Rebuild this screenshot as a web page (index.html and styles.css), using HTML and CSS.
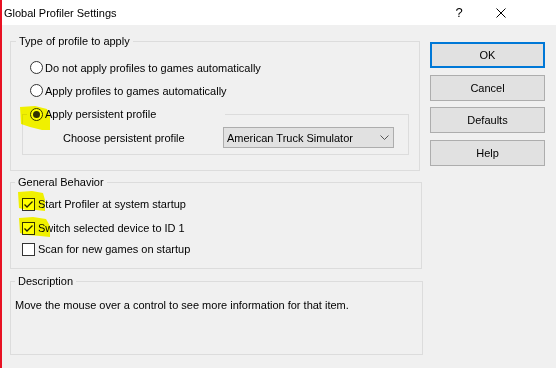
FILE: index.html
```html
<!DOCTYPE html>
<html lang="en">
<head>
  <meta charset="UTF-8">
  <title>Global Profiler Settings</title>
  <link rel="stylesheet" href="styles.css">
</head>
<body>
  <div class="titlebar">
    <span class="title">Global Profiler Settings</span>
    <span class="title-button">?</span>
    <span class="title-button">
      <svg width="10" height="10" viewBox="0 0 10 10"><path d="M0.5 0.5 L9.5 9.5 M9.5 0.5 L0.5 9.5" stroke="#000" stroke-width="1" fill="none"/></svg>
    </span>
  </div>

  <div class="dialog">
    <div class="settings">
      <fieldset class="group group-type">
        <legend>Type of profile to apply</legend>
        <div class="group-body">
          <label class="option"><span class="radio"></span>Do not apply profiles to games automatically</label>
          <label class="option"><span class="radio"></span>Apply profiles to games automatically</label>
          <fieldset class="subgroup">
            <legend class="sub-legend"><label class="option option-legend"><span class="radio checked"></span>Apply persistent profile</label></legend>
            <div class="profile-row">
              <span class="profile-label">Choose persistent profile</span>
              <div class="select">
                <span>American Truck Simulator</span>
                <svg class="chevron" width="9" height="5" viewBox="0 0 9 5"><path d="M0.5 0.5 L4.5 4.5 L8.5 0.5" stroke="#555" stroke-width="1" fill="none"/></svg>
              </div>
            </div>
          </fieldset>
        </div>
      </fieldset>

      <fieldset class="group group-behavior">
        <legend class="legend-tight">General Behavior</legend>
        <div class="group-body checks">
          <label class="check"><span class="box"><svg width="11" height="11" viewBox="0 0 11 11"><path d="M1.5 5.5 L4 8 L9.5 2.5" stroke="#222" stroke-width="1.3" fill="none"/></svg></span>Start Profiler at system startup</label>
          <label class="check check-second"><span class="box"><svg width="11" height="11" viewBox="0 0 11 11"><path d="M1.5 5.5 L4 8 L9.5 2.5" stroke="#222" stroke-width="1.3" fill="none"/></svg></span>Switch selected device to ID 1</label>
          <label class="check check-third"><span class="box"></span>Scan for new games on startup</label>
        </div>
      </fieldset>

      <fieldset class="group group-description">
        <legend class="legend-tight">Description</legend>
        <p class="description">Move the mouse over a control to see more information for that item.</p>
      </fieldset>
    </div>

    <div class="actions">
      <button class="button default">OK</button>
      <button class="button">Cancel</button>
      <button class="button">Defaults</button>
      <button class="button">Help</button>
    </div>
  </div>

  <!-- highlighter marks drawn over the screenshot -->
  <svg class="marks" width="556" height="368" viewBox="0 0 556 368">
    <path d="M20 107 L35 106 L47 109 L50 116 L50 130 L42 130 L30 127 L21 124 Z" fill="#ffff00"/>
    <path d="M18 192 L32 191 L43 193 L45 200 L45 211 L36 210 L26 210 L19 208 Z" fill="#ffff00"/>
    <path d="M19 218 L33 217 L46 219 L50 226 L50 237 L40 236 L27 235 L20 233 Z" fill="#ffff00"/>
  </svg>
</body>
</html>
```

FILE: styles.css
```css
* {
  margin: 0;
  padding: 0;
  box-sizing: border-box;
}

body {
  width: 556px;
  height: 368px;
  overflow: hidden;
  position: relative;
  background: #f0f0f0;
  border-left: 2px solid #e81123;
  font-family: "Liberation Sans", Arial, sans-serif;
  font-size: 11px;
  color: #000;
}

.titlebar {
  height: 25px;
  background: #fff;
  display: flex;
  align-items: center;
  padding: 0 34px 0 2px;
}

.title {
  flex: 1;
}

.title-button {
  width: 42px;
  display: flex;
  justify-content: center;
  align-items: center;
  font-size: 13px;
}

.dialog {
  display: flex;
  padding: 9px 0 0 8px;
}

.settings {
  width: 413px;
}

.group {
  border: 1px solid #dcdcdc;
}

.group legend {
  margin-left: 5px;
  padding: 0 3px;
  line-height: 14px;
}

.group .legend-tight {
  margin-left: 4px;
}

.group-type {
  width: 410px;
}

.group-behavior {
  width: 412px;
  margin-top: 4px;
}

.group-description {
  width: 413px;
  height: 81px;
  margin-top: 5px;
}

.group-body {
  padding: 8px 0 15px 11px;
}

.option {
  display: flex;
  align-items: center;
  height: 23px;
  margin-left: 8px;
}

.radio {
  width: 13px;
  height: 13px;
  border: 1px solid #333;
  border-radius: 50%;
  background: #fff;
  margin-right: 2px;
  display: flex;
  align-items: center;
  justify-content: center;
}

.radio.checked::after {
  content: "";
  width: 7px;
  height: 7px;
  border-radius: 50%;
  background: #333;
}

.subgroup {
  width: 387px;
  margin-top: 4px;
  border: 1px solid #dcdcdc;
}

.subgroup .sub-legend {
  margin-left: 4px;
  padding: 0;
  line-height: 16px;
  width: 198px;
  background: #f0f0f0;
}

.option-legend {
  height: 16px;
  margin-left: 3px;
}

.profile-row {
  display: flex;
  align-items: center;
  padding: 5px 0 6px 40px;
}

.profile-label {
  width: 160px;
}

.select {
  width: 171px;
  height: 21px;
  background: #e1e1e1;
  border: 1px solid #adadad;
  display: flex;
  align-items: center;
  justify-content: space-between;
  padding: 0 4px 0 3px;
}

.checks {
  padding: 5px 0 9px 11px;
}

.check {
  display: flex;
  align-items: center;
  height: 20px;
}

.check-second {
  margin-top: 4px;
}

.check-third {
  margin-top: 1px;
}

.box {
  width: 13px;
  height: 13px;
  border: 1px solid #333;
  background: #fff;
  margin-right: 3px;
  display: flex;
  align-items: center;
  justify-content: center;
}

.description {
  padding: 10px 4px;
  line-height: 15px;
}

.actions {
  display: flex;
  flex-direction: column;
  gap: 6.5px;
  margin-left: 7px;
  padding-top: 8px;
}

.button {
  width: 115px;
  height: 26px;
  background: #e1e1e1;
  border: 1px solid #adadad;
  font-family: inherit;
  font-size: 11px;
  color: #000;
}

.button.default {
  border: 2px solid #0078d7;
}

.marks {
  position: absolute;
  top: 0;
  left: -2px;
  pointer-events: none;
  mix-blend-mode: multiply;
}
```
